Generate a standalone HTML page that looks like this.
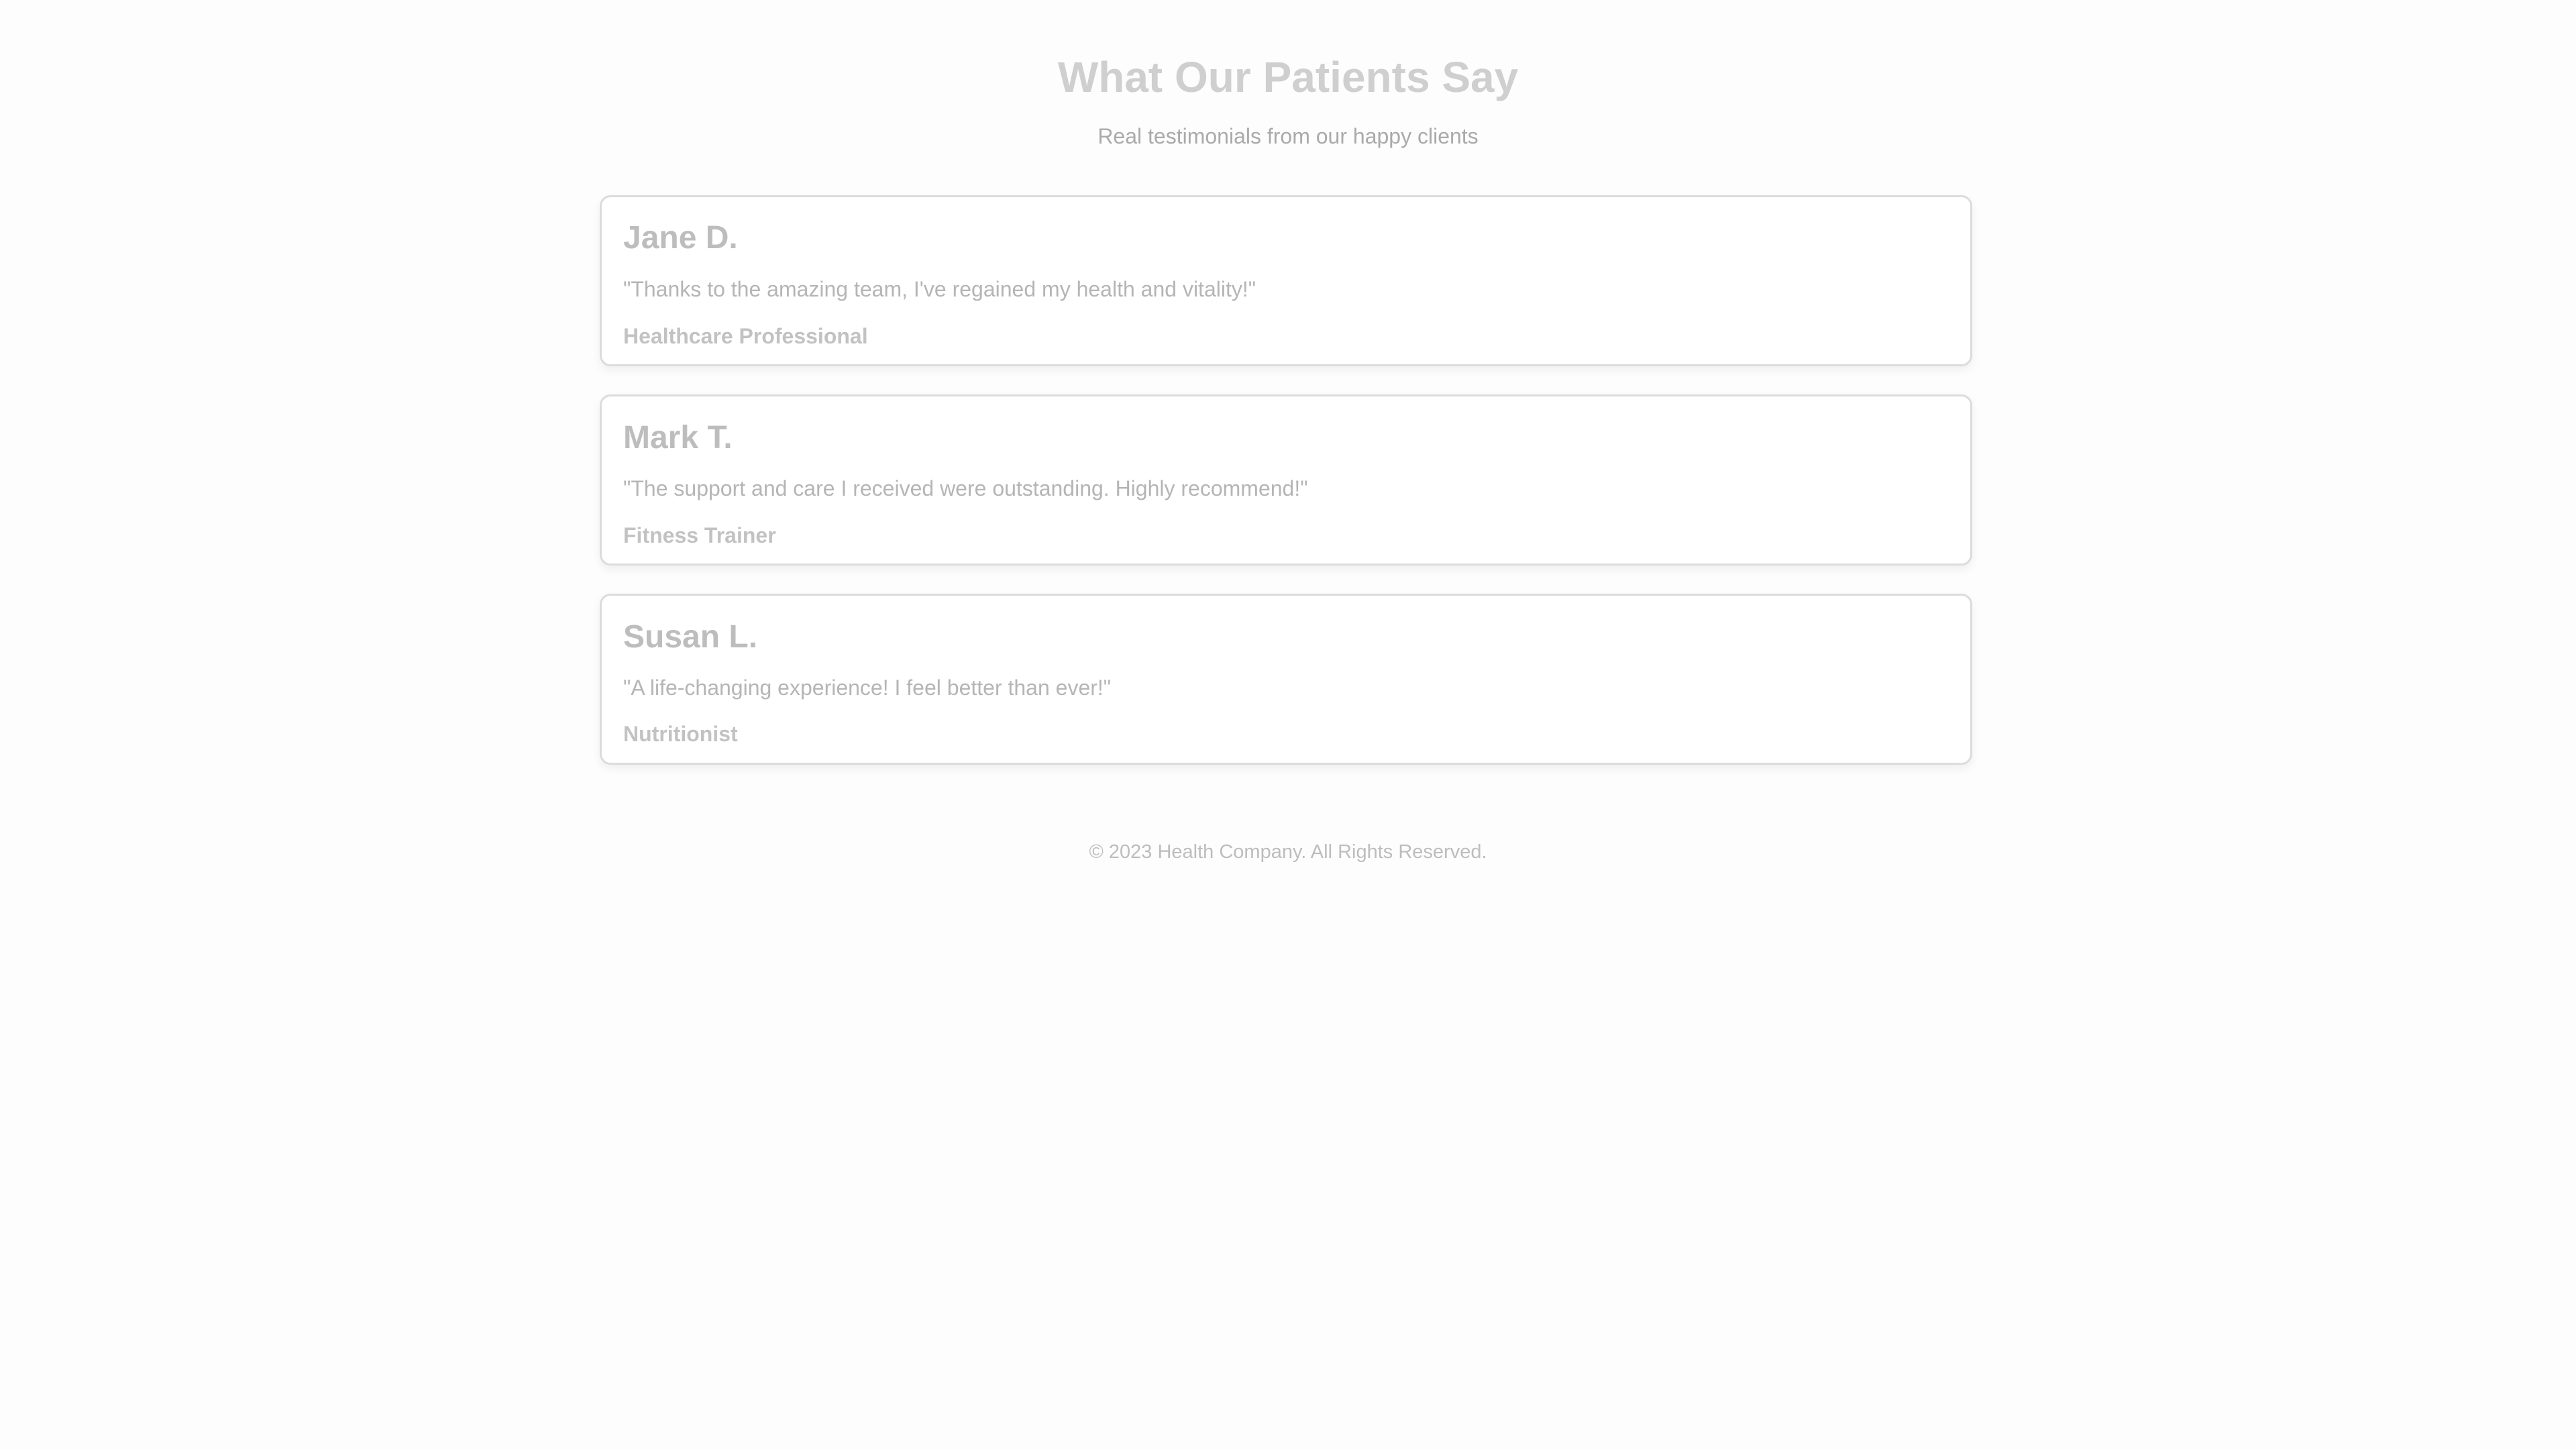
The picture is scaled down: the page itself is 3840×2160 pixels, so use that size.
<!DOCTYPE html>
<html><head><meta charset="utf-8"><style>
html,body{margin:0;padding:0;}
body{width:3840px;height:2160px;background:#fdfdfd;position:relative;overflow:hidden;font-family:"Liberation Sans",Arial,sans-serif;}
.t{position:absolute;white-space:nowrap;line-height:80px;}
.c{position:absolute;left:894px;width:2046px;height:255px;background:#fff;border:3px solid #dcdcdc;border-radius:16px;box-shadow:0 6px 14px rgba(0,0,0,0.06);box-sizing:border-box;}
.n{position:absolute;left:32px;font-size:48px;font-weight:bold;color:#bdbdbd;line-height:60px;}
.q{position:absolute;left:32px;font-size:32px;color:#b5b5b5;line-height:40px;white-space:nowrap;}
.r{position:absolute;left:32px;font-size:32px;font-weight:bold;color:#c2c2c2;line-height:40px;white-space:nowrap;}
</style></head><body>
<div class="t" style="left:0;width:3840px;text-align:center;top:75px;font-size:64px;font-weight:bold;color:#cfcfcf;">What Our Patients Say</div>
<div class="t" style="left:0;width:3840px;text-align:center;top:163px;font-size:32px;color:#aaaaaa;">Real testimonials from our happy clients</div>

<div class="c" style="top:291px;">
<div class="n" style="top:31px;">Jane D.</div>
<div class="q" style="top:117px;">"Thanks to the amazing team, I've regained my health and vitality!"</div>
<div class="r" style="top:187px;">Healthcare Professional</div>
</div>
<div class="c" style="top:588px;">
<div class="n" style="top:32px;">Mark T.</div>
<div class="q" style="top:117px;">"The support and care I received were outstanding. Highly recommend!"</div>
<div class="r" style="top:187px;">Fitness Trainer</div>
</div>
<div class="c" style="top:885px;">
<div class="n" style="top:32px;">Susan L.</div>
<div class="q" style="top:117px;">"A life-changing experience! I feel better than ever!"</div>
<div class="r" style="top:186px;">Nutritionist</div>
</div>

<div class="t" style="left:0;width:3840px;text-align:center;top:1230px;font-size:29px;color:#bdbdbd;">© 2023 Health Company. All Rights Reserved.</div>
</body></html>
